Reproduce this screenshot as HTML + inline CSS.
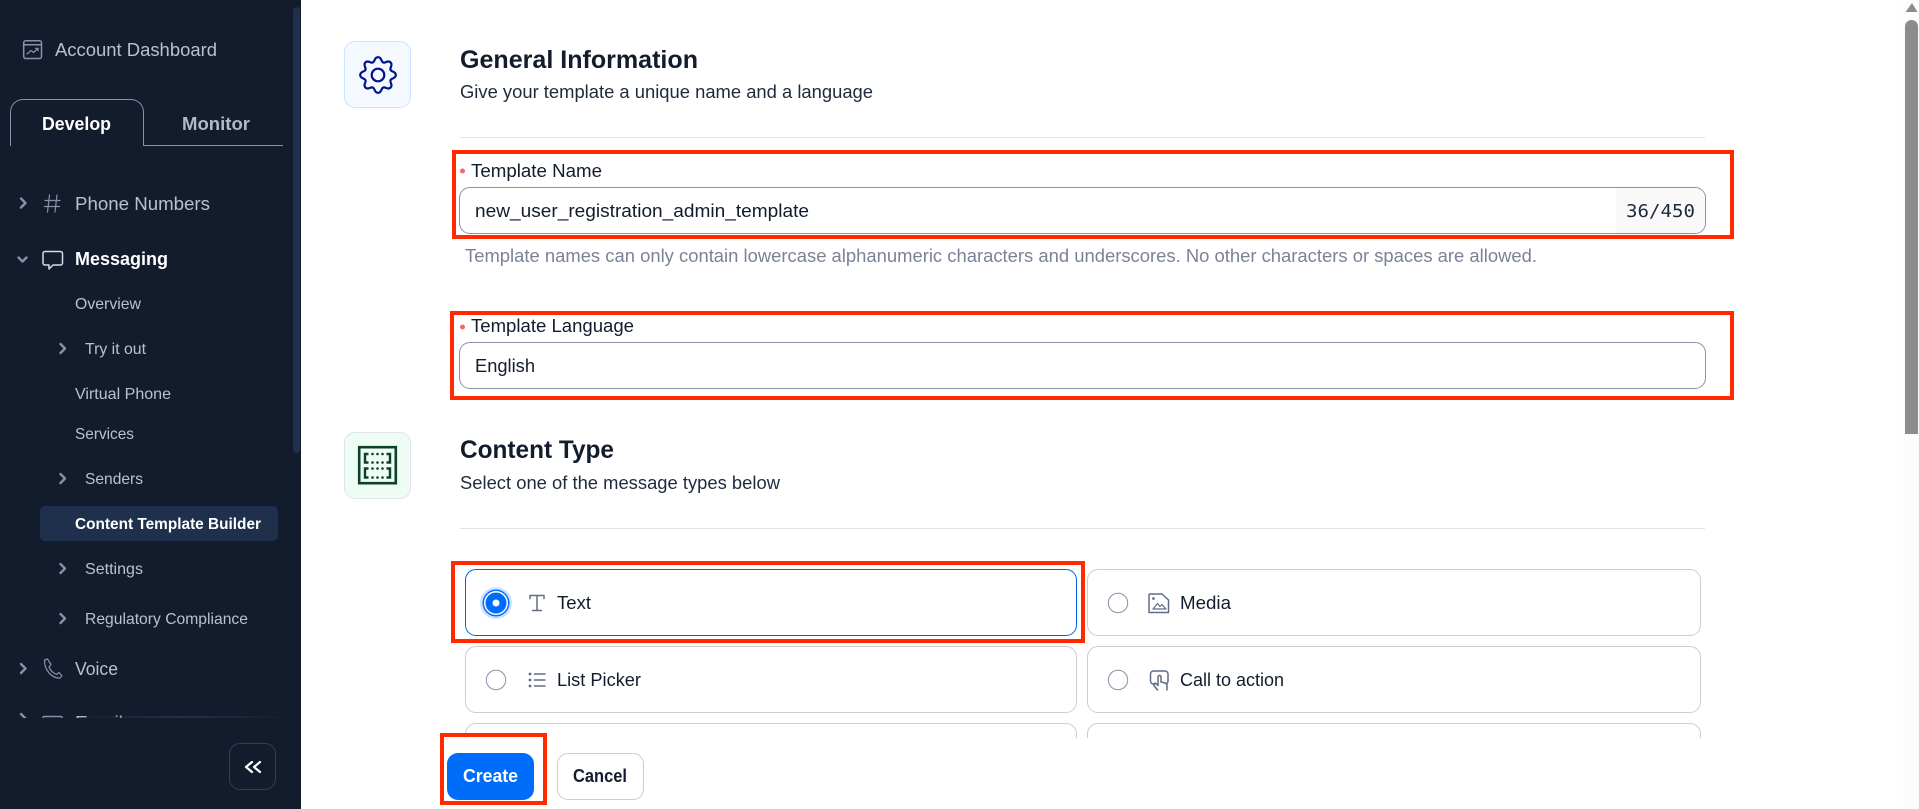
<!DOCTYPE html>
<html lang="en">
<head>
<meta charset="utf-8">
<title>Content Template Builder</title>
<style>
html,body{margin:0;padding:0;width:1919px;height:809px;overflow:hidden;background:#fff}
body{position:relative;font-family:"Liberation Sans",sans-serif}
.b{position:absolute;box-sizing:border-box}
svg{position:absolute;left:0;top:0}
text{font-family:"Liberation Sans",sans-serif;white-space:pre}
.side{fill:#bcc0cd;font-size:18px}
.sub{fill:#bcc0cd;font-size:16px}
.w{fill:#fff;font-weight:700}
.h{fill:#121c2d;font-size:25px;font-weight:700}
.p{fill:#1f2a3d;font-size:18px}
.l{fill:#121c2d;font-size:18px}
.g{fill:#7a8298;font-size:18px}
.ic{fill:none;stroke:#606b85;stroke-width:1.5;stroke-linecap:round;stroke-linejoin:round}
.si{fill:none;stroke:#8891aa;stroke-width:1.5;stroke-linecap:round;stroke-linejoin:round}
.ch{fill:none;stroke:#8891aa;stroke-width:2.4;stroke-linecap:round;stroke-linejoin:round}
.red{position:absolute;box-sizing:border-box;border:4px solid #ff2a00}
.card{position:absolute;box-sizing:border-box;border:1px solid #cacdd8;border-radius:11px;background:#fff}
</style>
</head>
<body>
<!-- sidebar -->
<div class="b" style="left:0;top:0;width:301px;height:809px;background:#121c2d"></div>
<div class="b" style="left:293px;top:7px;width:7px;height:446px;background:#1f304c;border-radius:4px"></div>
<div class="b" style="left:40px;top:506px;width:238px;height:35px;background:#1f304c;border-radius:5px"></div>
<div class="b" style="left:10px;top:99px;width:134px;height:47px;border:1px solid #8891aa;border-bottom:0;border-radius:13px 13px 0 0"></div>
<div class="b" style="left:143px;top:145px;width:140px;height:1px;background:#8891aa"></div>
<div class="b" style="left:229px;top:743px;width:47px;height:47px;border:1px solid #303f5c;border-radius:11px"></div>

<!-- main section icons -->
<div class="b" style="left:344px;top:41px;width:67px;height:67px;background:#f4f9ff;border:1px solid #cce4ff;border-radius:11px"></div>
<div class="b" style="left:344px;top:432px;width:67px;height:67px;background:#edfdf3;border:1px solid #e1e3ea;border-radius:11px"></div>

<!-- dividers -->
<div class="b" style="left:460px;top:137px;width:1245px;height:1px;background:#e1e3ea"></div>
<div class="b" style="left:460px;top:528px;width:1245px;height:1px;background:#e1e3ea"></div>

<!-- inputs -->
<div class="b" style="left:459px;top:187px;width:1247px;height:47px;border:1px solid #8891aa;border-radius:11px;overflow:hidden">
  <div class="b" style="right:0;top:0;width:89px;height:45px;background:#f9f9fa"></div>
</div>
<div class="b" style="left:459px;top:342px;width:1247px;height:47px;border:1px solid #8891aa;border-radius:11px"></div>

<!-- cards -->
<div class="card" style="left:465px;top:569px;width:612px;height:67px;border-color:#0263e0"></div>
<div class="card" style="left:1087px;top:569px;width:614px;height:67px"></div>
<div class="card" style="left:465px;top:646px;width:612px;height:67px"></div>
<div class="card" style="left:1087px;top:646px;width:614px;height:67px"></div>
<div class="card" style="left:465px;top:723px;width:612px;height:67px"></div>
<div class="card" style="left:1087px;top:723px;width:614px;height:67px"></div>
<div class="b" style="left:301px;top:738px;width:1600px;height:71px;background:#fff"></div>

<!-- buttons -->
<div class="b" style="left:447px;top:753px;width:87px;height:47px;background:#006dfa;border-radius:11px"></div>
<div class="b" style="left:557px;top:753px;width:87px;height:47px;background:#fff;border:1px solid #cacdd8;border-radius:11px"></div>

<!-- page scrollbar -->
<div class="b" style="left:1903px;top:0;width:16px;height:809px;background:#fcfcfc"></div>
<div class="b" style="left:1905px;top:20px;width:13px;height:414px;background:#8c8c8c;border-radius:7px 7px 0 0"></div>

<svg width="1919" height="809" viewBox="0 0 1919 809" xmlns="http://www.w3.org/2000/svg">
  <defs>
    <clipPath id="navclip"><rect x="0" y="0" width="293" height="718"/></clipPath>
    <linearGradient id="fade" x1="0" x2="1" y1="0" y2="0">
      <stop offset="0" stop-color="#2a3a55" stop-opacity="0"/>
      <stop offset=".5" stop-color="#2a3a55" stop-opacity=".7"/>
      <stop offset="1" stop-color="#2a3a55" stop-opacity="0"/>
    </linearGradient>
    <path id="lobe" d="M-5.2 -12.6C-3 -13 -3.9 -17.8 0 -17.8C3.9 -17.8 3 -13 5.2 -12.6"/>
  </defs>

  <!-- scrollbar arrow -->
  <path d="M1912 3L1917.5 12H1905.5Z" fill="#8c8c8c"/>

  <!-- Sidebar text -->
  <text class="side" x="55" y="56" textLength="162" lengthAdjust="spacingAndGlyphs">Account Dashboard</text>
  <text class="w" font-size="18" x="42" y="130" textLength="69" lengthAdjust="spacingAndGlyphs">Develop</text>
  <text font-size="18" font-weight="700" fill="#b4b9c8" x="182" y="130" textLength="68" lengthAdjust="spacingAndGlyphs">Monitor</text>
  <text class="side" x="75" y="210" textLength="135" lengthAdjust="spacingAndGlyphs">Phone Numbers</text>
  <text class="w" font-size="18" x="75" y="265" textLength="93" lengthAdjust="spacingAndGlyphs">Messaging</text>
  <text class="sub" x="75" y="309" textLength="66" lengthAdjust="spacingAndGlyphs">Overview</text>
  <text class="sub" x="85" y="354" textLength="61" lengthAdjust="spacingAndGlyphs">Try it out</text>
  <text class="sub" x="75" y="399" textLength="96" lengthAdjust="spacingAndGlyphs">Virtual Phone</text>
  <text class="sub" x="75" y="439" textLength="59" lengthAdjust="spacingAndGlyphs">Services</text>
  <text class="sub" x="85" y="484" textLength="58" lengthAdjust="spacingAndGlyphs">Senders</text>
  <text class="w" font-size="16" x="75" y="529" textLength="186" lengthAdjust="spacingAndGlyphs">Content Template Builder</text>
  <text class="sub" x="85" y="574" textLength="58" lengthAdjust="spacingAndGlyphs">Settings</text>
  <text class="sub" x="85" y="624" textLength="163" lengthAdjust="spacingAndGlyphs">Regulatory Compliance</text>
  <text class="side" x="75" y="675" textLength="43" lengthAdjust="spacingAndGlyphs">Voice</text>
  <g clip-path="url(#navclip)">
    <text class="side" x="75" y="729" textLength="48" lengthAdjust="spacingAndGlyphs">Email</text>
    <rect x="43" y="716.5" width="19" height="14" rx="1" fill="none" stroke="#8891aa" stroke-width="1.5"/>
    <path d="M21 714L25.5 718.5L21 723" fill="none" stroke="#8891aa" stroke-width="2.4" stroke-linecap="round" stroke-linejoin="round"/>
  </g>

  <!-- Sidebar icons -->
  <g class="si">
    <rect x="23.7" y="40.7" width="17.8" height="17.8" rx="2"/>
    <path d="M24 44.7H41"/>
    <path d="M27 54L31 50.5L33.5 52.5L38 48.5M35.5 48.3H38V50.6" stroke-width="1.2"/>
    <path d="M49.5 195L47.5 212M57 195L55 212M45 200.5H60M44.5 206.5H59.5" stroke-width="1.2"/>
    <path d="M45 251.5H60.5A2 2 0 0 1 62.5 253.5V263A2 2 0 0 1 60.5 265H53L49 269V265H45A2 2 0 0 1 43 263V253.5A2 2 0 0 1 45 251.5Z" stroke="#d8dbe4"/>
    <path d="M44.5 660L47.5 659L51 664.5L49 667C50.5 670.5 53 673 56.5 674.5L59 672.5L62 676L60 678C52 678.5 44 670 44.5 660Z" stroke-width="1.2"/>
  </g>
  <g class="ch">
    <path d="M21 198.5L25.5 203L21 207.5"/>
    <path d="M18.5 257.5L22.5 261.5L26.5 257.5"/>
    <path d="M60.5 344L65 348.5L60.5 353"/>
    <path d="M60.5 474L65 478.5L60.5 483"/>
    <path d="M60.5 564L65 568.5L60.5 573"/>
    <path d="M60.5 614L65 618.5L60.5 623"/>
    <path d="M21 664L25.5 668.5L21 673"/>
  </g>
  <path d="M252 762L246 767L252 772M260 762L254 767L260 772" fill="none" stroke="#fff" stroke-width="2.2" stroke-linecap="round" stroke-linejoin="round"/>
  <rect x="70" y="716" width="222" height="2" fill="url(#fade)"/>

  <!-- Gear -->
  <g transform="translate(378 75)" fill="none" stroke="#001489" stroke-width="2.2" stroke-linecap="round" stroke-linejoin="round">
    <use href="#lobe"/>
    <use href="#lobe" transform="rotate(45)"/>
    <use href="#lobe" transform="rotate(90)"/>
    <use href="#lobe" transform="rotate(135)"/>
    <use href="#lobe" transform="rotate(180)"/>
    <use href="#lobe" transform="rotate(225)"/>
    <use href="#lobe" transform="rotate(270)"/>
    <use href="#lobe" transform="rotate(315)"/>
    <circle cx="0" cy="0" r="6.3"/>
  </g>

  <!-- Content type icon -->
  <g fill="none" stroke="#0e4029" stroke-width="2.4">
    <rect x="359.2" y="447.2" width="36.6" height="36" stroke-width="2.6"/>
    <path d="M368.5 454H365V462.5H368.5M386.5 454H390V462.5H386.5"/>
    <path d="M368.5 468.5H365V477.5H368.5M386.5 468.5H390V477.5H386.5"/>
  </g>
  <g fill="#0e4029">
    <circle cx="372.5" cy="454" r="1.3"/><circle cx="377.5" cy="454" r="1.3"/><circle cx="382.5" cy="454" r="1.3"/>
    <circle cx="372.5" cy="462.5" r="1.3"/><circle cx="377.5" cy="462.5" r="1.3"/><circle cx="382.5" cy="462.5" r="1.3"/>
    <circle cx="372.5" cy="468.5" r="1.3"/><circle cx="377.5" cy="468.5" r="1.3"/><circle cx="382.5" cy="468.5" r="1.3"/>
    <circle cx="372.5" cy="477.5" r="1.3"/><circle cx="377.5" cy="477.5" r="1.3"/><circle cx="382.5" cy="477.5" r="1.3"/>
  </g>

  <!-- General info -->
  <text class="h" x="460" y="68" textLength="238" lengthAdjust="spacingAndGlyphs">General Information</text>
  <text class="p" x="460" y="98" textLength="413" lengthAdjust="spacingAndGlyphs">Give your template a unique name and a language</text>
  <circle cx="462.5" cy="171" r="2.5" fill="#f0696b"/>
  <text class="l" x="471" y="177" textLength="131" lengthAdjust="spacingAndGlyphs">Template Name</text>
  <text class="l" x="475" y="217" textLength="334" lengthAdjust="spacingAndGlyphs">new_user_registration_admin_template</text>
  <text x="1626" y="217" font-size="18" fill="#1f2a3d" style="font-family:'DejaVu Sans Mono',monospace" textLength="69" lengthAdjust="spacingAndGlyphs">36/450</text>
  <text class="g" x="465" y="262" textLength="1072" lengthAdjust="spacingAndGlyphs">Template names can only contain lowercase alphanumeric characters and underscores. No other characters or spaces are allowed.</text>
  <circle cx="462.5" cy="327" r="2.5" fill="#f0696b"/>
  <text class="l" x="471" y="332" textLength="163" lengthAdjust="spacingAndGlyphs">Template Language</text>
  <text class="l" x="475" y="372" textLength="60" lengthAdjust="spacingAndGlyphs">English</text>

  <!-- Content type -->
  <text class="h" x="460" y="458" textLength="154" lengthAdjust="spacingAndGlyphs">Content Type</text>
  <text class="p" x="460" y="489" textLength="320" lengthAdjust="spacingAndGlyphs">Select one of the message types below</text>

  <!-- Radios -->
  <circle cx="496" cy="603" r="16" fill="#cde2ff"/>
  <circle cx="496" cy="603" r="13.5" fill="#006dfa"/>
  <circle cx="496" cy="603" r="12" fill="#fff"/>
  <circle cx="496" cy="603" r="10.5" fill="#006dfa"/>
  <circle cx="496" cy="603" r="3.5" fill="#fff"/>
  <circle cx="496" cy="680" r="9.7" fill="#fff" stroke="#8891aa" stroke-width="1"/>
  <circle cx="1118" cy="603" r="9.7" fill="#fff" stroke="#8891aa" stroke-width="1"/>
  <circle cx="1118" cy="680" r="9.7" fill="#fff" stroke="#8891aa" stroke-width="1"/>

  <!-- Card icons -->
  <path class="ic" d="M530 598.5V595.5H544V598.5M537 595.5V610M532.5 610.5H541.5" stroke-width="1.4"/>
  <g fill="#606b85">
    <circle cx="530" cy="674" r="1.4"/><circle cx="530" cy="680" r="1.4"/><circle cx="530" cy="686" r="1.4"/>
  </g>
  <path class="ic" d="M534.5 674H545M534.5 680H545M534.5 686H545" stroke-width="1.3"/>
  <g class="ic">
    <path d="M1150 594H1162L1168.5 600V612.5H1149V595A1 1 0 0 1 1150 594Z"/>
    <path d="M1153 609L1157.5 603.5L1160 606.5L1162 604.5L1166 609Z" stroke-width="1.2"/>
    <circle cx="1153.5" cy="598.5" r=".6"/>
  </g>
  <g class="ic" stroke-width="1.4">
    <path d="M1155 684H1153.5A3 3 0 0 1 1150.5 681V674A3 3 0 0 1 1153.5 671H1165A3 3 0 0 1 1168 674V681A3 3 0 0 1 1166 683.8"/>
    <path d="M1157.5 690L1154 685.5A1.3 1.3 0 0 1 1156.5 684L1158 685.5V677A1.5 1.5 0 0 1 1161 677V682L1165 683A2.5 2.5 0 0 1 1167 685.5V690"/>
  </g>

  <!-- Card text -->
  <text class="l" x="557" y="609" textLength="34" lengthAdjust="spacingAndGlyphs">Text</text>
  <text class="l" x="557" y="686" textLength="84" lengthAdjust="spacingAndGlyphs">List Picker</text>
  <text class="l" x="1180" y="609" textLength="51" lengthAdjust="spacingAndGlyphs">Media</text>
  <text class="l" x="1180" y="686" textLength="104" lengthAdjust="spacingAndGlyphs">Call to action</text>

  <!-- Buttons -->
  <text class="w" font-size="18" x="463" y="782" textLength="55" lengthAdjust="spacingAndGlyphs">Create</text>
  <text fill="#121c2d" font-weight="700" font-size="18" x="573" y="782" textLength="54" lengthAdjust="spacingAndGlyphs">Cancel</text>
</svg>

<!-- annotation boxes -->
<div class="red" style="left:452px;top:150px;width:1282px;height:89px"></div>
<div class="red" style="left:450px;top:311px;width:1284px;height:89px"></div>
<div class="red" style="left:451px;top:561px;width:634px;height:82px"></div>
<div class="red" style="left:440px;top:733px;width:107px;height:72px"></div>
</body>
</html>
